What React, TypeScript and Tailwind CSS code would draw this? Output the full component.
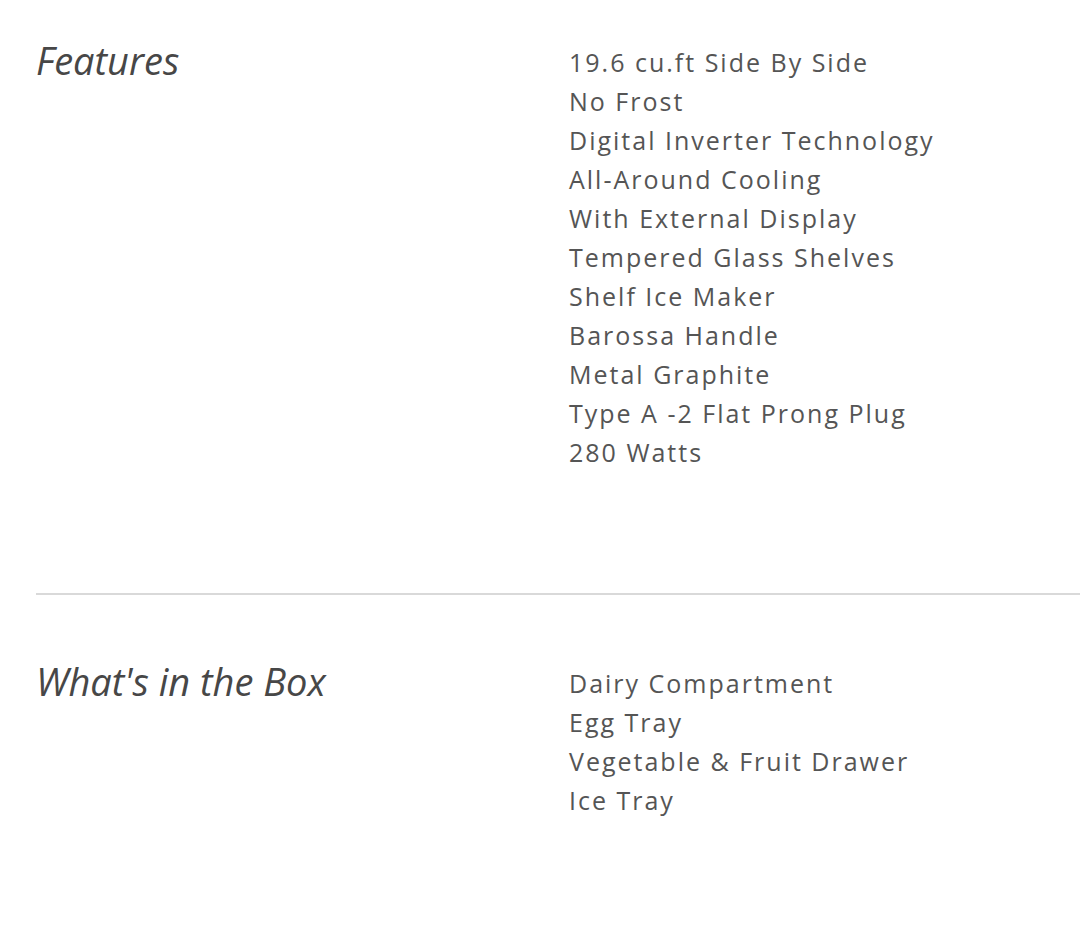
import React from "react";

const features = [
  "19.6 cu.ft Side By Side",
  "No Frost",
  "Digital Inverter Technology",
  "All-Around Cooling",
  "With External Display",
  "Tempered Glass Shelves",
  "Shelf Ice Maker",
  "Barossa Handle",
  "Metal Graphite",
  "Type A -2 Flat Prong Plug",
  "280 Watts",
];

const box = ["Dairy Compartment", "Egg Tray", "Vegetable & Fruit Drawer", "Ice Tray"];

function Section({ title, items }: { title: string; items: string[] }) {
  return (
    <div className="flex">
      <h2
        className="w-[533px] shrink-0 text-[38px] leading-[40px] italic text-[#474747] -mt-[3px]"
        style={{ fontFamily: '"Open Sans", sans-serif' }}
      >
        {title}
      </h2>
      <ul
        className="text-[25px] leading-[39px] text-[#555555] tracking-[2px]"
        style={{ fontFamily: '"Open Sans", sans-serif' }}
      >
        {items.map((t) => (
          <li key={t}>{t}</li>
        ))}
      </ul>
    </div>
  );
}

export default function App() {
  return (
    <div className="w-[1080px] h-[929px] bg-white pl-[36px] overflow-hidden">
      <div className="pt-[43px]">
        <Section title="Features" items={features} />
      </div>
      <div className="mt-[121px] h-[2px] bg-[#d9d9d9]" />
      <div className="pt-[69px]">
        <Section title="What's in the Box" items={box} />
      </div>
    </div>
  );
}
